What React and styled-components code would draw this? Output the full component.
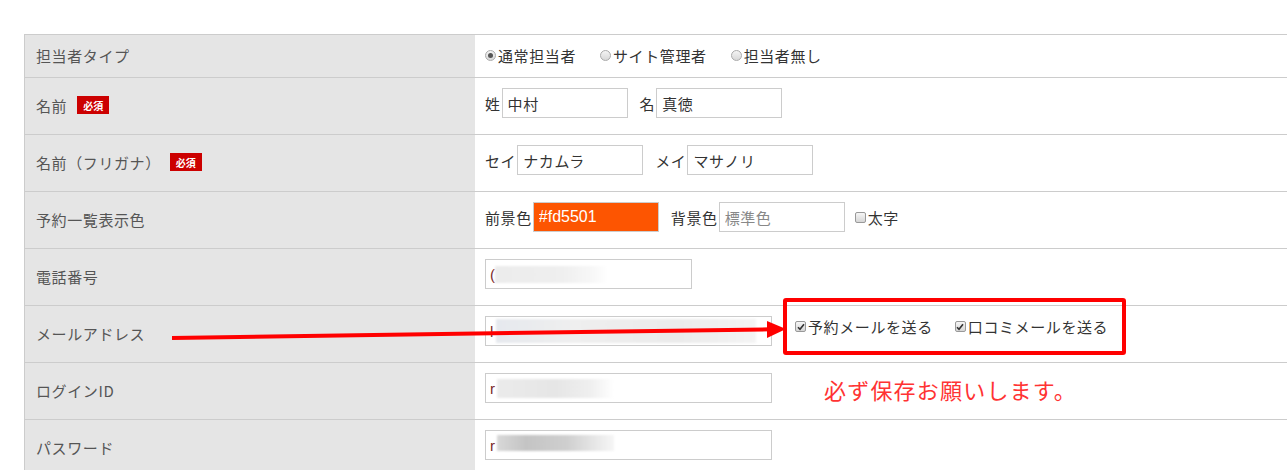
import React from "react";
import styled, { createGlobalStyle } from "styled-components";

const GlobalStyle = createGlobalStyle`
  html, body {
    margin: 0;
    padding: 0;
    background: #fff;
    overflow: hidden;
  }
  body {
    font-family: "Noto Sans CJK JP", "Noto Sans", sans-serif;
  }
`;

const Page = styled.div`
  position: relative;
  width: 1287px;
  height: 470px;
  padding: 34px 0 0 24px;
  box-sizing: border-box;
  overflow: hidden;
`;

const Table = styled.div`
  width: 1300px;
  border-left: 1px solid #ccc;
`;

const Row = styled.div`
  display: grid;
  grid-template-columns: 450px 1fr;
  height: ${(p) => (p.$short ? "43px" : "57px")};
  border-top: 1px solid #ccc;
  box-sizing: border-box;
`;

const Label = styled.div`
  display: flex;
  align-items: center;
  background: #e5e5e5;
  padding: 0 0 2px 11px;
  font-size: 15px;
  letter-spacing: 0.6px;
  color: #555;
`;

const Required = styled.span`
  display: inline-flex;
  align-items: center;
  justify-content: center;
  width: 32px;
  height: 18px;
  margin-left: ${(p) => p.$gap || "10px"};
  background: #c00;
  color: #fff;
  font-size: 10px;
  font-weight: bold;
  letter-spacing: 0;
`;

const Cell = styled.div`
  display: flex;
  align-items: ${(p) => (p.$center ? "center" : "flex-start")};
  padding: ${(p) => (p.$center ? "0 0 2px 10px" : "10px 0 0 10px")};
  font-size: 15px;
  letter-spacing: 0.6px;
  color: #333;
`;

const Pair = styled.label`
  display: inline-flex;
  align-items: center;
  height: 30px;
  margin-right: ${(p) => p.$mr || "12px"};
  white-space: nowrap;
`;

const Input = styled.input`
  box-sizing: border-box;
  width: ${(p) => p.$w || "126px"};
  height: 30px;
  margin: 0 0 0 ${(p) => p.$ml || "1px"};
  padding: 0 5px;
  border: 1px solid #ccc;
  background: ${(p) => p.$bg || "#fff"};
  color: ${(p) => p.$fg || "#333"};
  font-family: ${(p) => (p.$latin ? '"Liberation Sans", Arial, sans-serif' : 'inherit')};
  font-size: ${(p) => (p.$latin ? "16px" : "15px")};
  letter-spacing: ${(p) => (p.$latin ? "0" : "0.6px")};
  outline: none;
  &::placeholder {
    color: #888;
  }
`;

const Field = styled.div`
  position: relative;
  display: flex;
  align-items: center;
  box-sizing: border-box;
  width: ${(p) => p.$w};
  height: 30px;
  padding-left: 4px;
  border: 1px solid #ccc;
  background: #fff;
  font-family: "Liberation Sans", Arial, sans-serif;
  font-size: 15px;
  color: #7a2a2a;
  flex-shrink: 0;
`;

const Blur = styled.span`
  display: block;
  height: ${(p) => p.$h}px;
  width: ${(p) => p.$w}px;
  margin-left: ${(p) => p.$ml || 0}px;
  margin-top: ${(p) => p.$mt || 0}px;
  background: ${(p) => p.$bg};
  filter: blur(1px);
`;

const Radio = styled.span`
  position: relative;
  display: inline-block;
  width: 11px;
  height: 11px;
  margin-right: 2px;
  border-radius: 50%;
  border: 1px solid #aaa;
  background: linear-gradient(#f4f4f4, #d8d8d8);
  box-sizing: border-box;
  &::after {
    content: "";
    display: ${(p) => (p.$on ? "block" : "none")};
    position: absolute;
    left: 2px;
    top: 2px;
    width: 5px;
    height: 5px;
    border-radius: 50%;
    background: #555;
  }
`;

const Choice = styled.span`
  display: inline-flex;
  align-items: center;
  margin-right: ${(p) => p.$mr || "23px"};
  white-space: nowrap;
`;

const Check = styled.span`
  display: inline-flex;
  align-items: center;
  justify-content: center;
  width: 11px;
  height: 11px;
  margin-right: 2px;
  border: 1px solid #999;
  border-radius: 2px;
  background: linear-gradient(#f6f6f6, #d6d6d6);
  box-sizing: border-box;
  svg {
    display: ${(p) => (p.$on ? "block" : "none")};
  }
`;

const Callout = styled.div`
  position: relative;
  display: inline-flex;
  align-items: center;
  box-sizing: border-box;
  height: 57px;
  margin: -18px 0 0 11px;
  padding: 0 14px 0 8px;
  border: 4px solid #f00;
  border-radius: 3px;
  white-space: nowrap;
`;

const Note = styled.span`
  margin: 1px 0 0 52px;
  line-height: 30px;
  font-size: 22px;
  letter-spacing: 1.2px;
  color: #f33;
  white-space: nowrap;
`;

const Overlay = styled.svg`
  position: absolute;
  left: 0;
  top: 0;
  pointer-events: none;
`;

const Tick = () => (
  <svg width="8" height="8" viewBox="0 0 8 8">
    <path d="M1 4.2 L3 6.3 L7 1.2" fill="none" stroke="#333" strokeWidth="1.6" />
  </svg>
);

export default function App() {
  return (
    <>
      <GlobalStyle />
      <Page>
        <Table>
          <Row $short>
            <Label>担当者タイプ</Label>
            <Cell $center>
              <Choice $mr="24px"><Radio $on />通常担当者</Choice>
              <Choice $mr="24px"><Radio />サイト管理者</Choice>
              <Choice><Radio />担当者無し</Choice>
            </Cell>
          </Row>
          <Row>
            <Label>名前<Required>必須</Required></Label>
            <Cell>
              <Pair>姓<Input defaultValue="中村" /></Pair>
              <Pair>名<Input defaultValue="真徳" /></Pair>
            </Cell>
          </Row>
          <Row>
            <Label>名前（フリガナ）<Required $gap="9px">必須</Required></Label>
            <Cell>
              <Pair>セイ<Input defaultValue="ナカムラ" /></Pair>
              <Pair>メイ<Input defaultValue="マサノリ" /></Pair>
            </Cell>
          </Row>
          <Row>
            <Label>予約一覧表示色</Label>
            <Cell>
              <Pair>前景色<Input $latin $bg="#fd5501" $fg="#fff" defaultValue="#fd5501" /></Pair>
              <Pair $mr="10px">背景色<Input placeholder="標準色" /></Pair>
              <Pair><Check />太字</Pair>
            </Cell>
          </Row>
          <Row>
            <Label>電話番号</Label>
            <Cell>
              <Field $w="207px">
                (
                <Blur $w={113} $h={17} $ml={-1} $bg="linear-gradient(90deg, #ececec, #efefef 60%, #f7f7f7 85%, #fff)" />
              </Field>
            </Cell>
          </Row>
          <Row>
            <Label>メールアドレス</Label>
            <Cell>
              <Field $w="287px">
                l
                <Blur $w={260} $h={24} $ml={2} $bg="linear-gradient(90deg, #e6e9ee, #efefef 30%, #ebebeb 70%, #f4f4f4)" />
              </Field>
              <Callout>
                <Choice $mr="22px"><Check $on><Tick /></Check>予約メールを送る</Choice>
                <Choice $mr="0"><Check $on><Tick /></Check>口コミメールを送る</Choice>
              </Callout>
            </Cell>
          </Row>
          <Row>
            <Label>ログインID</Label>
            <Cell>
              <Field $w="287px">
                r
                <Blur $w={117} $h={19} $ml={1} $bg="linear-gradient(90deg, #ebebeb, #e6e6e6 50%, #efefef 80%, #fff)" />
              </Field>
              <Note>必ず保存お願いします。</Note>
            </Cell>
          </Row>
          <Row>
            <Label>パスワード</Label>
            <Cell>
              <Field $w="287px">
                r
                <Blur $w={117} $h={16} $ml={1} $mt={-4} $bg="linear-gradient(90deg, #d8d8d8, #c4c4c4 25%, #cfcfcf 60%, #e8e8e8 85%, #f6f6f6)" />
              </Field>
            </Cell>
          </Row>
        </Table>
        <Overlay width="1287" height="470" viewBox="0 0 1287 470">
          <line x1="172" y1="338" x2="770" y2="329.3" stroke="#f00" strokeWidth="4" />
          <polygon points="767,321 786,329 767,338" fill="#f00" />
        </Overlay>
      </Page>
    </>
  );
}
